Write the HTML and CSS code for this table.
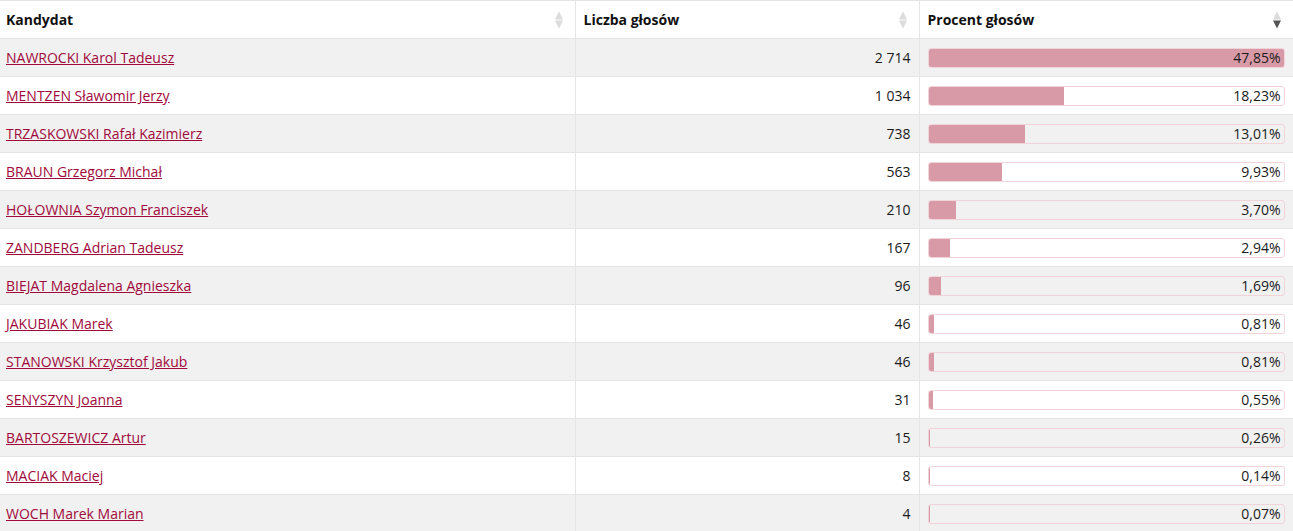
FILE: index.html
```html
<!DOCTYPE html>
<html lang="pl">
<head>
<meta charset="utf-8">
<title>Wyniki</title>
<link rel="stylesheet" href="styles.css">
</head>
<body>
<table class="results">
  <colgroup>
    <col class="c-name">
    <col class="c-votes">
    <col class="c-pct">
  </colgroup>
  <thead>
    <tr>
      <th class="th-name"><div class="th-inner"><span>Kandydat</span><svg class="sort" width="8" height="18" viewBox="0 0 8 18"><path d="M4 0.5 L8 8.5 L0 8.5 Z" fill="#dcdcdc"/><path d="M0 9.5 L8 9.5 L4 17.5 Z" fill="#dcdcdc"/></svg></div></th>
      <th class="th-votes"><div class="th-inner"><span>Liczba głosów</span><svg class="sort" width="8" height="18" viewBox="0 0 8 18"><path d="M4 0.5 L8 8.5 L0 8.5 Z" fill="#dcdcdc"/><path d="M0 9.5 L8 9.5 L4 17.5 Z" fill="#dcdcdc"/></svg></div></th>
      <th class="th-pct"><div class="th-inner"><span>Procent głosów</span><svg class="sort" width="8" height="18" viewBox="0 0 8 18"><path d="M4 0.5 L8 8.5 L0 8.5 Z" fill="#dcdcdc"/><path d="M0 9.5 L8 9.5 L4 17.5 Z" fill="#555555"/></svg></div></th>
    </tr>
  </thead>
  <tbody>
    <tr class="odd"><td class="name"><a href="#">NAWROCKI Karol Tadeusz</a></td><td class="votes">2 714</td><td class="pct"><div class="bar"><div class="fill" style="width:100%"></div><span class="val">47,85%</span></div></td></tr>
    <tr><td class="name"><a href="#">MENTZEN Sławomir Jerzy</a></td><td class="votes">1 034</td><td class="pct"><div class="bar"><div class="fill" style="width:38.1%"></div><span class="val">18,23%</span></div></td></tr>
    <tr class="odd"><td class="name"><a href="#">TRZASKOWSKI Rafał Kazimierz</a></td><td class="votes">738</td><td class="pct"><div class="bar"><div class="fill" style="width:27.19%"></div><span class="val">13,01%</span></div></td></tr>
    <tr><td class="name"><a href="#">BRAUN Grzegorz Michał</a></td><td class="votes">563</td><td class="pct"><div class="bar"><div class="fill" style="width:20.75%"></div><span class="val">9,93%</span></div></td></tr>
    <tr class="odd"><td class="name"><a href="#">HOŁOWNIA Szymon Franciszek</a></td><td class="votes">210</td><td class="pct"><div class="bar"><div class="fill" style="width:7.73%"></div><span class="val">3,70%</span></div></td></tr>
    <tr><td class="name"><a href="#">ZANDBERG Adrian Tadeusz</a></td><td class="votes">167</td><td class="pct"><div class="bar"><div class="fill" style="width:6.14%"></div><span class="val">2,94%</span></div></td></tr>
    <tr class="odd"><td class="name"><a href="#">BIEJAT Magdalena Agnieszka</a></td><td class="votes">96</td><td class="pct"><div class="bar"><div class="fill" style="width:3.53%"></div><span class="val">1,69%</span></div></td></tr>
    <tr><td class="name"><a href="#">JAKUBIAK Marek</a></td><td class="votes">46</td><td class="pct"><div class="bar"><div class="fill" style="width:1.69%"></div><span class="val">0,81%</span></div></td></tr>
    <tr class="odd"><td class="name"><a href="#">STANOWSKI Krzysztof Jakub</a></td><td class="votes">46</td><td class="pct"><div class="bar"><div class="fill" style="width:1.69%"></div><span class="val">0,81%</span></div></td></tr>
    <tr><td class="name"><a href="#">SENYSZYN Joanna</a></td><td class="votes">31</td><td class="pct"><div class="bar"><div class="fill" style="width:1.15%"></div><span class="val">0,55%</span></div></td></tr>
    <tr class="odd"><td class="name"><a href="#">BARTOSZEWICZ Artur</a></td><td class="votes">15</td><td class="pct"><div class="bar"><div class="fill" style="width:0.54%"></div><span class="val">0,26%</span></div></td></tr>
    <tr><td class="name"><a href="#">MACIAK Maciej</a></td><td class="votes">8</td><td class="pct"><div class="bar"><div class="fill" style="width:0.29%"></div><span class="val">0,14%</span></div></td></tr>
    <tr class="odd"><td class="name"><a href="#">WOCH Marek Marian</a></td><td class="votes">4</td><td class="pct"><div class="bar"><div class="fill" style="width:0.15%"></div><span class="val">0,07%</span></div></td></tr>
  </tbody>
</table>
</body>
</html>
```

FILE: styles.css
```css
html, body {
  margin: 0;
  padding: 0;
  background: #ffffff;
}

body {
  font-family: "Open Sans", "Liberation Sans", sans-serif;
  font-size: 14px;
  color: #1a1a1a;
}

.results {
  width: 1293px;
  border-collapse: collapse;
  table-layout: fixed;
}

.c-name { width: 575px; }
.c-votes { width: 344px; }
.c-pct { width: 374px; }

.results th,
.results td {
  border: 1px solid #e5e5e5;
  height: 38px;
  padding: 0 8px;
  box-sizing: border-box;
  vertical-align: middle;
}

.results th:first-child,
.results td:first-child {
  border-left: none;
  padding-left: 6px;
}

.results th {
  font-weight: 700;
  text-align: left;
  color: #111;
  background: #fff;
}

.th-inner {
  display: flex;
  align-items: center;
  justify-content: space-between;
}

.sort {
  display: block;
  margin-right: 4px;
}

.results tr.odd td {
  background: #f1f1f1;
}

.name a {
  color: #a1093b;
  text-decoration: underline;
}

.votes {
  text-align: right;
  color: #1a1a1a;
}

.pct {
  padding: 0 9px 0 8px;
}

.bar {
  position: relative;
  height: 20px;
  border: 1px solid #f1d3da;
  border-radius: 3px;
  box-sizing: border-box;
  overflow: hidden;
}

.fill {
  height: 100%;
  background: #d99aa8;
}

.val {
  position: absolute;
  right: 3px;
  top: 0;
  line-height: 18px;
  color: #1a1a1a;
}
```
